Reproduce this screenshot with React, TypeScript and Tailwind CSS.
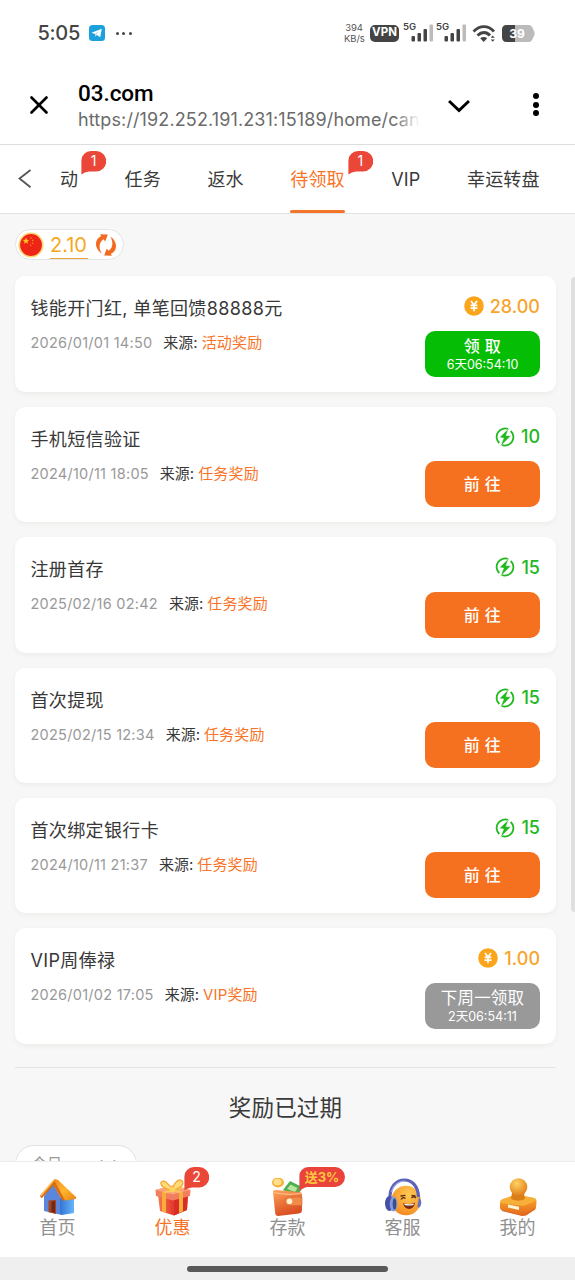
import { ChevronDown, X } from "lucide-react";

type Reward = {
  title: string;
  date: string;
  source: string;
  kind: "coin" | "bolt";
  amount: string;
  action: "claim" | "go" | "wait";
  countdown?: string;
};

const rewards: Reward[] = [
  { title: "钱能开门红, 单笔回馈88888元", date: "2026/01/01 14:50", source: "活动奖励", kind: "coin", amount: "28.00", action: "claim", countdown: "6天06:54:10" },
  { title: "手机短信验证", date: "2024/10/11 18:05", source: "任务奖励", kind: "bolt", amount: "10", action: "go" },
  { title: "注册首存", date: "2025/02/16 02:42", source: "任务奖励", kind: "bolt", amount: "15", action: "go" },
  { title: "首次提现", date: "2025/02/15 12:34", source: "任务奖励", kind: "bolt", amount: "15", action: "go" },
  { title: "首次绑定银行卡", date: "2024/10/11 21:37", source: "任务奖励", kind: "bolt", amount: "15", action: "go" },
  { title: "VIP周俸禄", date: "2026/01/02 17:05", source: "VIP奖励", kind: "coin", amount: "1.00", action: "wait", countdown: "2天06:54:11" },
];

const tabs = [
  { label: "动", badge: "1" },
  { label: "任务" },
  { label: "返水" },
  { label: "待领取", badge: "1", active: true },
  { label: "VIP" },
  { label: "幸运转盘" },
];

function Signal() {
  return (
    <div className="relative h-[20px] w-[31px]">
      <span className="absolute left-0 top-0 text-[9.5px] font-semibold leading-[9px]">5G</span>
      <svg viewBox="0 0 31 20" className="h-[20px] w-[31px]" fill="#444">
        <rect x="8.5" y="14" width="3.5" height="5.5" rx="1" />
        <rect x="14.5" y="11" width="3.5" height="8.5" rx="1" />
        <rect x="20.5" y="7" width="3.5" height="12.5" rx="1" />
        <rect x="26.5" y="2.5" width="3.5" height="17" rx="1" fill="#bbb" />
      </svg>
    </div>
  );
}

function StatusBar() {
  return (
    <div className="flex h-[65px] items-center pl-[37.5px] pr-[40px] pt-px text-[#444]">
      <span className="w-[43px] text-[20px] font-medium leading-none tracking-[-0.3px]">5:05</span>
      <svg viewBox="0 0 16 16" className="ml-[8px] h-4 w-4">
        <rect width="16" height="16" rx="3.5" fill="#1ca1dc" />
        <path d="M2.5 7.8 12.8 3.8 11.2 12.2 7.8 10 6.3 11.5 5.9 8.9Z" fill="#fff" />
        <path d="m6 8.9 4.4-3.1-3.2 3.6-.9 2.1Z" fill="#9bd5ef" />
      </svg>
      <div className="ml-[11px] flex gap-[3.5px]">
        <i className="size-[3px] rounded-full bg-[#444]" />
        <i className="size-[3px] rounded-full bg-[#444]" />
        <i className="size-[3px] rounded-full bg-[#444]" />
      </div>
      <div className="ml-auto flex items-center">
        <div className="w-[20px] text-center text-[9.5px] leading-[11.5px] tracking-[-0.1px] text-[#555]">
          394
          <br />
          <span className="whitespace-nowrap">KB/s</span>
        </div>
        <div className="ml-[6px] flex h-[17px] w-[29px] items-center justify-center rounded-[5px] bg-[#444] text-[11.5px] font-bold leading-none text-white">
          VPN
        </div>
        <div className="mb-[2px] ml-[4px] flex gap-[2px]">
          <Signal />
          <Signal />
        </div>
        <svg viewBox="0 0 25 19" className="ml-[5px] h-[19px] w-[25px]" fill="none" stroke="#444" strokeWidth="2.8">
          <path d="M1.5 7.5C8 1 16 1 22 7.5" />
          <path d="M5.5 11.5c4-4 9-4 12.5 0" />
          <path d="M8.2 14.3c2-1.8 5-1.8 7 0L11.7 18Z" fill="#444" stroke="none" />
          <path d="m18.7 13.8 2-2.3 2 2.3Zm0 1.7 2 2.3 2-2.3Z" fill="#444" stroke="none" />
        </svg>
        <div className="relative ml-[5px] h-[17px] w-[33px]">
          <svg viewBox="0 0 33 17" className="h-[17px] w-[33px]">
            <path d="M5 0h22q2 0 3.2 2.2l2 4.3q.8 2 0 4l-2 4.3Q29 17 27 17H5q-5 0-5-5V5q0-5 5-5Z" fill="#bbb" />
            <path d="M5 0h8v17H5q-5 0-5-5V5q0-5 5-5Z" fill="#444" />
          </svg>
          <span className="absolute inset-0 right-[3px] text-center text-[12px] font-bold leading-[17px] text-white">39</span>
        </div>
      </div>
    </div>
  );
}

function BrowserBar() {
  return (
    <div className="flex h-[80px] items-center border-b border-[#dedede] pl-[24px] pr-[35px]">
      <X className="size-[30px] text-black" strokeWidth={2.1} />
      <div className="ml-[24px] w-[342px] pt-px">
        <div className="font-['Roboto'] text-[22.5px] font-medium leading-[28px] tracking-[-0.05px] text-black">03.com</div>
        <div className="relative overflow-hidden whitespace-nowrap text-[18px] leading-[25px] tracking-[0.12px] text-[#6b6b6b]">
          https://192.252.191.231:15189/home/can
          <div className="absolute right-0 top-0 h-full w-[26px] bg-linear-to-r from-white/0 to-white" />
        </div>
      </div>
      <svg viewBox="0 0 22 14" className="ml-[28px] mt-[3px] h-[14px] w-[22px]" fill="none" stroke="#000" strokeWidth="3">
        <path d="m1 2 10 9.5L21 2" />
      </svg>
      <div className="ml-auto flex w-[7px] flex-col gap-[2.5px]">
        <i className="size-[6px] rounded-full bg-black" />
        <i className="size-[6px] rounded-full bg-black" />
        <i className="size-[6px] rounded-full bg-black" />
      </div>
    </div>
  );
}

function Bubble({ text }: { text: string }) {
  return (
    <span className="absolute left-full top-[-19px] ml-[4px] h-[24px] w-[25px]">
      <svg viewBox="0 0 25 24" className="absolute inset-0 h-[24px] w-[25px]">
        <path d="M10 0h5a10 10 0 0 1 0 20.500H8Q3.500 21 .4 23.600V9.500A9.600 9.600 0 0 1 10 0Z" fill="#ea4738" />
      </svg>
      <span className="absolute inset-x-0 top-0 text-center text-[14px] leading-[20px] text-white">{text}</span>
    </span>
  );
}

function Tabs() {
  return (
    <div className="flex h-[69px] items-center border-b border-[#e2e2e2] pl-[18px]">
      <svg viewBox="0 0 14 20" className="h-[20px] w-[14px] shrink-0" fill="none" stroke="#555" strokeWidth="1.800">
        <path d="M12.500 1 1.500 9.500l11 8.800" />
      </svg>
      <div className="ml-[28px] flex h-full gap-[46.400px]">
        {tabs.map((tab) => (
          <div key={tab.label} className="relative flex h-full items-center pt-px">
            <span className={`relative whitespace-nowrap text-[18px] leading-[26px] tracking-[0.2px] ${tab.active ? "text-[#f87429]" : "text-[#3a3a3a]"}`}>
              {tab.label}
            </span>
            {tab.badge && (
              <span className="absolute right-[1px] top-[25px]">
                <Bubble text={tab.badge} />
              </span>
            )}
            {tab.active && <span className="absolute inset-x-0 bottom-0 h-[3px] rounded-full bg-[#f4742c]" />}
          </div>
        ))}
      </div>
    </div>
  );
}

function Balance() {
  return (
    <div className="flex h-[31px] w-[109px] items-center rounded-full border border-[#e2e6e3] bg-white pl-[2px]">
      <svg viewBox="0 0 26 26" className="size-[26px]">
        <circle cx="13" cy="13" r="11.700" fill="#ed2416" stroke="#ffd36e" strokeWidth="1.6" />
        <path d="m8 5.600.9 2.200 2.300.1-1.800 1.500.6 2.300-2-1.200-2 1.200.6-2.300-1.800-1.500 2.300-.1Z" fill="#fbc620" />
        <g fill="#f58a1c">
          <circle cx="13" cy="6" r=".8" />
          <circle cx="14.700" cy="8.400" r=".8" />
          <circle cx="14.500" cy="11.200" r=".8" />
          <circle cx="12.600" cy="13.300" r=".8" />
        </g>
      </svg>
      <div className="ml-[6px] flex w-[38px] flex-col pt-[2px]">
        <span className="whitespace-nowrap text-[20px] leading-[26px] text-[#f7a823]">2.10</span>
        <span className="h-[1.500px] bg-[#eda23a]" />
      </div>
      <svg viewBox="0 0 22 22" className="ml-[7px] size-[22px]">
        <path d="M6.800 19.500C-1 14.500-.8 5.200 6.300 2L5 .2l7.800.4-2.600 7-1.600-2.400C4.500 7.500 3 13.500 6.800 19.500Z" fill="#f26a20" />
        <path d="M15.200 2.500C23 7.500 22.800 16.800 15.700 20l1.300 1.800-7.800-.4 2.600-7 1.600 2.400C17.500 14.500 19 8.500 15.200 2.500Z" fill="#f26a20" />
      </svg>
    </div>
  );
}

function CoinIcon() {
  return (
    <svg viewBox="0 0 20 20" className="size-[20px]">
      <circle cx="10" cy="10" r="9.800" fill="#fba51c" />
      <path d="m7 5 3 4 3-4M10 9v6.200M6.600 9.400h6.800M6.600 12.200h6.800" fill="none" stroke="#fff" strokeWidth="1.700" />
    </svg>
  );
}

function BoltIcon() {
  return (
    <svg viewBox="0 0 20 20" className="size-[20px]">
      <path d="M4.300 16A8.400 8.400 0 0 1 13.500 2.200M15.700 4A8.400 8.400 0 0 1 6.500 17.800" fill="none" stroke="#22b81e" strokeWidth="1.800" />
      <path d="M13.600 1.500 4.300 10.600l4.300.5-3.200 8.400 10.500-10.700-4.800-.2Z" fill="#22b81e" stroke="#fff" strokeWidth=".5" />
    </svg>
  );
}

function RewardCard({ item }: { item: Reward }) {
  return (
    <div className="flex h-[115.4px] justify-between rounded-[10px] bg-white px-[15.5px] shadow-[0_2px_5px_rgba(90,60,30,0.06)]">
      <div>
        <h3 className="mt-[19px] whitespace-nowrap text-[18px] leading-[27px] tracking-[0.36px] text-[#383838]">{item.title}</h3>
        <div className="mt-[10px] flex whitespace-nowrap text-[15px] leading-[22px]">
          <span className="text-[14.5px] tracking-[0.25px] text-[#999]">{item.date}</span>
          <span className="ml-[11px] text-[#383838]">来源:</span>
          <span className="ml-[4px] tracking-[0.15px] text-[#f87429]">{item.source}</span>
        </div>
      </div>
      <div className="flex flex-col items-end">
        <div className={`mt-[17px] flex h-[26px] items-center text-[18px] font-medium ${item.kind === "coin" ? "text-[#f7a42b]" : "text-[#22b81e]"}`}>
          {item.kind === "coin" ? <CoinIcon /> : <BoltIcon />}
          <span className="ml-[6px]">{item.amount}</span>
        </div>
        <button
          className={`mt-[11.400px] flex h-[46px] w-[115px] flex-col items-center justify-center whitespace-nowrap rounded-[10px] text-white ${
            item.action === "claim" ? "bg-[#05bd05]" : item.action === "go" ? "bg-[#f6711f]" : "bg-[#999]"
          }`}
        >
          {item.action === "wait" ? (
            <span className="pt-[3px] text-[16.5px] leading-[20px] tracking-[0.2px]">下周一领取</span>
          ) : (
            <span className={`text-[16px] font-medium leading-[20px] tracking-[0.4px] ${item.action === "claim" ? "pt-[3px]" : ""}`}>
              {item.action === "claim" ? "领 取" : "前 往"}
            </span>
          )}
          {item.countdown && <span className="text-[12.5px] leading-[18px]">{item.countdown}</span>}
        </button>
      </div>
    </div>
  );
}

function HomeIcon() {
  return (
    <svg viewBox="0 0 38 38" className="size-[38px]">
      <defs>
        <linearGradient id="roof" x1="0" y1="0" x2="1" y2="1">
          <stop stopColor="#f18a16" />
          <stop offset=".5" stopColor="#ffb52f" />
          <stop offset="1" stopColor="#e98016" />
        </linearGradient>
        <linearGradient id="wall">
          <stop stopColor="#3474d2" />
          <stop offset="1" stopColor="#67b5fb" />
        </linearGradient>
      </defs>
      <path d="M5 18 14 6l9 16v15L5 33Z" fill="#5b86dc" />
      <path d="m21 20 14-1v16l-12 2-2-1Z" fill="url(#wall)" />
      <path d="M9.500 22.500 17 22v14l-7.500-1.800Z" fill="#a4441e" />
      <path d="m12.500 23.500 3.500-.2v11.500l-3.500-1Z" fill="#6e2917" />
      <path d="M14 2q2-1.500 5 0l18 17q.8 2-1.500 2.300L25 22.500Z" fill="url(#roof)" />
      <path d="M15 2 1.500 17q-.8 2.500 1.500 3L14.500 7.500 23 22q1.500 1.500 3 .2Z" fill="#d96d12" />
      <path d="M15 2 2 17.500" stroke="#ffc155" strokeWidth="1.500" />
    </svg>
  );
}

function GiftIcon() {
  return (
    <svg viewBox="0 0 38 38" className="size-[38px]">
      <defs>
        <linearGradient id="box">
          <stop stopColor="#f47a54" />
          <stop offset=".5" stopColor="#e33a2c" />
          <stop offset="1" stopColor="#f0644a" />
        </linearGradient>
      </defs>
      <path d="m4 17 16 4 14-4-1 15-13 5.500L6 33Z" fill="url(#box)" />
      <path d="M20 21v16.500L33 32l1-15Z" fill="#d82d26" />
      <path d="m1.500 12 17-4.500 18 4.500-.5 6-17 4.500L2 18Z" fill="#f17e5e" />
      <path d="m1.500 12 17 4.500 18-4.500-18-4.500Z" fill="#fba27b" />
      <path d="m8 14 4 1v20l-4-1.500ZM25 15l4-1v19.500L25 35Z" fill="#f9ad38" />
      <path d="m8 14 19-5 4 1-19 5.200ZM29 14 12 9.200 8.500 10 25 15Z" fill="#fbc65a" />
      <path d="M18 12C12 12 6 8 7 4.500 9 1 15 5 18 12ZM19 12c0-7 6-12 9-9s-2 8-9 9Z" fill="#ffdc76" stroke="#f3a333" strokeWidth="1.200" />
      <circle cx="18.500" cy="11.500" r="3" fill="#ffd15b" />
    </svg>
  );
}

function WalletIcon() {
  return (
    <svg viewBox="0 0 38 38" className="size-[38px]">
      <defs>
        <linearGradient id="purse" x1="0" y1="0" x2=".4" y2="1">
          <stop stopColor="#ffa65c" />
          <stop offset=".6" stopColor="#e86d36" />
          <stop offset="1" stopColor="#d94e23" />
        </linearGradient>
      </defs>
      <ellipse cx="9" cy="4.500" rx="6" ry="5" fill="#f4b23c" />
      <ellipse cx="8.500" cy="4" rx="4" ry="3.200" fill="#ffe08a" />
      <path d="M14 12 21 3l12 6-4 10Z" fill="#4caf50" />
      <path d="m18 11 3.500-4.500 7 3.500-2.500 4Z" fill="#b7e59c" />
      <path d="M4 14q0-2 3-2l23 2q3 0 3 3v15q0 3-3 3.500L9 38q-2.500 0-2.800-3Z" fill="url(#purse)" />
      <path d="M5 14.500q10 3 27 1" fill="none" stroke="#ffc48a" strokeWidth="1.200" />
      <path d="M33 19H21q-5 .5-5 4.500 0 4 5 4h12Z" fill="#f08b4a" stroke="#d5602d" strokeWidth=".6" />
      <circle cx="20.500" cy="23.300" r="2.800" fill="#fff2cf" />
    </svg>
  );
}

function SupportIcon() {
  return (
    <svg viewBox="0 0 38 38" className="size-[38px]">
      <defs>
        <radialGradient id="face" cx=".6" cy=".3" r=".8">
          <stop stopColor="#ffc954" />
          <stop offset=".7" stopColor="#f99b2b" />
          <stop offset="1" stopColor="#ef7d1d" />
        </radialGradient>
      </defs>
      <circle cx="22" cy="22.500" r="14.700" fill="url(#face)" />
      <path d="M6 22C5 8 13 2 20.500 2S34 8 34.500 19" fill="none" stroke="#5c62b8" strokeWidth="3.200" />
      <path d="M7.500 14C10 5.500 16 3 21 3" fill="none" stroke="#a9aff0" strokeWidth="1.200" />
      <ellipse cx="5.500" cy="25.500" rx="4.500" ry="7.500" fill="#4650a5" />
      <ellipse cx="9.500" cy="26" rx="3.800" ry="7.500" fill="#7f9ae0" />
      <ellipse cx="10.500" cy="26" rx="1.800" ry="5.500" fill="#3e4b91" />
      <path d="M35 19q4 4 1 10-2 2-2.500-1Z" fill="#6470c4" />
      <path d="m16.500 18 5-.6M17 21.500q2-3 4.500-1M27.500 20q2.500-2.500 4.500 0M27.500 17.500l4 .3" fill="none" stroke="#5b2f15" strokeWidth="1.300" />
      <path d="M19 25q6 2.500 12-.5-.8 6-6 6.500-4.500-.2-6-6Z" fill="#7a2a16" />
      <path d="M20 25.600q5 1.400 10-.2l-.6 1.700q-4.500 1-8.600 0Z" fill="#fff" />
    </svg>
  );
}

function ProfileIcon() {
  return (
    <svg viewBox="0 0 38 38" className="size-[38px]">
      <defs>
        <radialGradient id="knob" cx=".4" cy=".3" r=".75">
          <stop stopColor="#ffd262" />
          <stop offset="1" stopColor="#e07a15" />
        </radialGradient>
        <linearGradient id="base" x1="0" y1="0" x2="0" y2="1">
          <stop stopColor="#f9ae33" />
          <stop offset="1" stopColor="#e5681a" />
        </linearGradient>
      </defs>
      <path d="M1 25q0-3 3-4l9-3q6-2 12 0l10 2q3 1 2.500 4l-.5 6q-.3 2-3 3l-7 4.500q-2 .7-4 0L3 32.500q-2-.6-2-2.500Z" fill="url(#base)" />
      <path d="M1 25q0-3 3-4l9-3q6-2 12 0l10 2q4 1.500 0 3.500l-9 4q-2 .8-4 0Z" fill="#f6b03a" />
      <path d="M13 15h12l1 6q-6 3.500-14 0Z" fill="#d97f18" />
      <circle cx="19.500" cy="9" r="8.800" fill="url(#knob)" />
      <path d="m9 26.500 11 2.200v3.200L9 29.500Z" fill="#fff5d7" />
      <path d="m3 32.500 20 5 7-3 5-4" fill="none" stroke="#d96222" strokeWidth="1" />
    </svg>
  );
}

const navItems = [
  { label: "首页", icon: <HomeIcon /> },
  { label: "优惠", icon: <GiftIcon />, badge: "2", active: true },
  { label: "存款", icon: <WalletIcon />, promo: "送3%" },
  { label: "客服", icon: <SupportIcon /> },
  { label: "我的", icon: <ProfileIcon /> },
];

function BottomNav() {
  return (
    <nav className="grid h-[96px] grid-cols-5 border-t border-[#ececec] bg-white">
      {navItems.map((item) => (
        <div key={item.label} className="relative flex flex-col items-center pt-[16px]">
          {item.icon}
          <span className={`text-[18px] leading-[24px] ${item.active ? "text-[#f87429]" : "text-[#909090]"}`}>{item.label}</span>
          {item.badge && (
            <span className="absolute left-[50px] top-[24px] w-[15px]">
              <Bubble text={item.badge} />
            </span>
          )}
          {item.promo && (
            <span className="absolute left-[69px] top-[5px] h-[25px] w-[46px]">
              <svg viewBox="0 0 46 25" className="absolute inset-0 h-[25px] w-[46px]">
                <path d="M9.500 0H36a10 10 0 0 1 0 20H8Q3 21 .4 24.600V9.500A9 9 0 0 1 9.500 0Z" fill="#e9433b" />
              </svg>
              <span className="absolute inset-x-0 top-0 whitespace-nowrap text-center text-[13px] font-bold leading-[20px] text-[#ffc83e]">{item.promo}</span>
            </span>
          )}
        </div>
      ))}
    </nav>
  );
}

export default function App() {
  return (
    <div className="flex h-[1280px] w-[575px] flex-col overflow-hidden bg-white font-['Inter','Noto_Sans_CJK_SC',sans-serif]">
      <StatusBar />
      <BrowserBar />
      <Tabs />
      <main className="relative h-[947px] shrink-0 overflow-hidden bg-[#f7f7f7] px-[15px] pt-[15px]">
        <Balance />
        <div className="mt-[16.400px] flex w-[540.500px] flex-col gap-[15px]">
          {rewards.map((item) => (
            <RewardCard key={item.title} item={item} />
          ))}
        </div>
        <div className="mt-[23px] w-[541px] border-t border-[#e3e3e3]" />
        <h2 className="mt-[24px] w-[541px] text-center text-[22.5px] leading-[32px] tracking-[0.2px] text-[#3a3a3a]">奖励已过期</h2>
        <div className="mt-[21.500px] flex h-[38px] w-[122px] items-center justify-between rounded-full border border-[#e2e2e2] bg-white pl-[16px] pr-[15px] text-[15px] text-[#999]">
          <span>今日</span>
          <ChevronDown className="size-[26px]" strokeWidth={1.5} />
        </div>
        {/* scroll thumb */}
        <div className="absolute right-0 top-[63px] h-[635px] w-[4px] rounded-l bg-[#dfdfdf]" />
      </main>
      <BottomNav />
      <div className="flex h-[23px] justify-center bg-[#efefef] pt-[9px]">
        <div className="h-[5.500px] w-[201px] rounded-full bg-[#595959]" />
      </div>
    </div>
  );
}
